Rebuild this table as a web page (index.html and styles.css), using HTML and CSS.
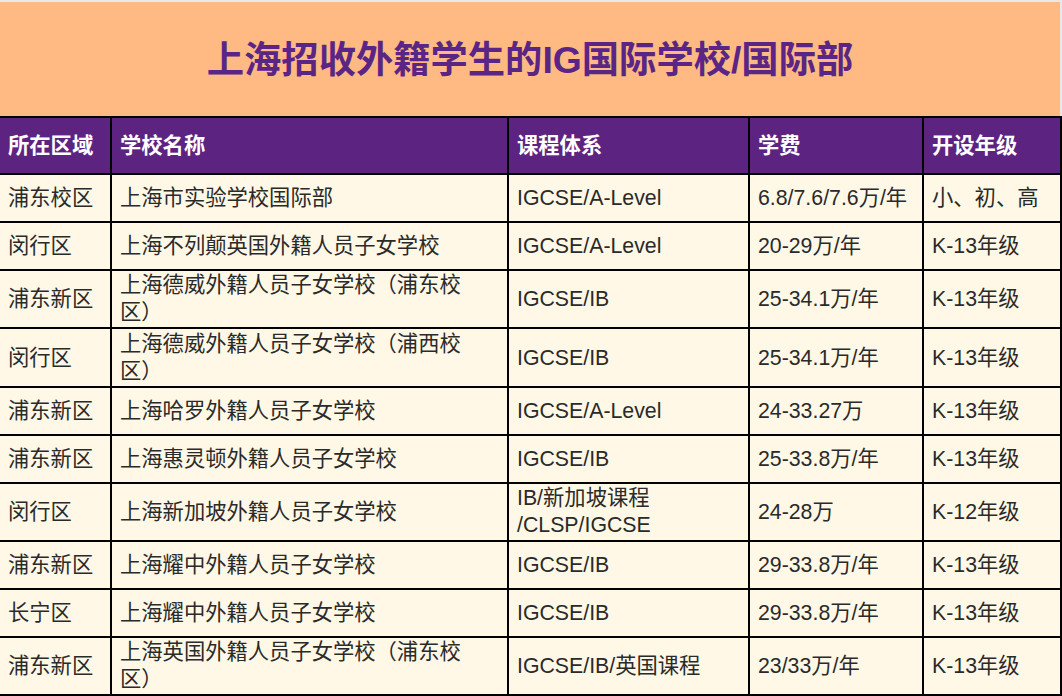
FILE: index.html
```html
<!DOCTYPE html>
<html lang="zh-CN">
<head>
<meta charset="utf-8">
<title>上海招收外籍学生的IG国际学校/国际部</title>
<link rel="stylesheet" href="styles.css">
</head>
<body>
<div class="banner"><h1 class="title">上海招收外籍学生的IG国际学校/国际部</h1></div>
<table class="schools">
  <colgroup>
    <col class="c1"><col class="c2"><col class="c3"><col class="c4"><col class="c5">
  </colgroup>
  <thead>
    <tr><th>所在区域</th><th>学校名称</th><th>课程体系</th><th>学费</th><th>开设年级</th></tr>
  </thead>
  <tbody>
    <tr><td>浦东校区</td><td class="name">上海市实验学校国际部</td><td>IGCSE/A-Level</td><td>6.8/7.6/7.6万/年</td><td>小、初、高</td></tr>
    <tr><td>闵行区</td><td class="name">上海不列颠英国外籍人员子女学校</td><td>IGCSE/A-Level</td><td>20-29万/年</td><td>K-13年级</td></tr>
    <tr><td>浦东新区</td><td class="name">上海德威外籍人员子女学校（浦东校区）</td><td>IGCSE/IB</td><td>25-34.1万/年</td><td>K-13年级</td></tr>
    <tr class="tall"><td>闵行区</td><td class="name">上海德威外籍人员子女学校（浦西校区）</td><td>IGCSE/IB</td><td>25-34.1万/年</td><td>K-13年级</td></tr>
    <tr><td>浦东新区</td><td class="name">上海哈罗外籍人员子女学校</td><td>IGCSE/A-Level</td><td>24-33.27万</td><td>K-13年级</td></tr>
    <tr><td>浦东新区</td><td class="name">上海惠灵顿外籍人员子女学校</td><td>IGCSE/IB</td><td>25-33.8万/年</td><td>K-13年级</td></tr>
    <tr><td>闵行区</td><td class="name">上海新加坡外籍人员子女学校</td><td>IB/新加坡课程<wbr>/CLSP/IGCSE</td><td>24-28万</td><td>K-12年级</td></tr>
    <tr><td>浦东新区</td><td class="name">上海耀中外籍人员子女学校</td><td>IGCSE/IB</td><td>29-33.8万/年</td><td>K-13年级</td></tr>
    <tr><td>长宁区</td><td class="name">上海耀中外籍人员子女学校</td><td>IGCSE/IB</td><td>29-33.8万/年</td><td>K-13年级</td></tr>
    <tr><td>浦东新区</td><td class="name">上海英国外籍人员子女学校（浦东校区）</td><td>IGCSE/IB/英国课程</td><td>23/33万/年</td><td>K-13年级</td></tr>
  </tbody>
</table>
</body>
</html>
```
FILE: styles.css
```css
html, body {
  margin: 0;
  padding: 0;
}
body {
  background: #e8e8e8;
  font-family: "Liberation Sans", "Noto Sans CJK SC", sans-serif;
  padding-top: 2px;
}
.banner {
  width: 1060px;
  height: 114px;
  background: #ffb982;
  display: flex;
  align-items: center;
  justify-content: center;
}
.title {
  margin: 0;
  font-size: 37.3px;
  font-weight: bold;
  color: #5b2586;
  line-height: 1.2;
  padding-top: 2px;
}
.schools {
  width: 1062px;
  table-layout: fixed;
  border-collapse: separate;
  border-spacing: 0;
  border-top: 2px solid #000;
}
.c1 { width: 112px; }
.c2 { width: 397px; }
.c3 { width: 241px; }
.c4 { width: 174px; }
.c5 { width: 138px; }
.schools th,
.schools td {
  box-sizing: content-box;
  border-right: 2px solid #000;
  border-bottom: 2px solid #000;
  text-align: left;
  vertical-align: middle;
  font-size: 21.3px;
}
.schools th {
  background: #5c2381;
  color: #fff;
  font-weight: bold;
  height: 55px;
  padding: 0 8px;
  line-height: 26px;
}
.schools td {
  background: #fff8e6;
  color: #2a2a2a;
  font-weight: normal;
  height: 44px;
  padding: 1px 8px 1px 8px;
  line-height: 27px;
}
.schools td.name {
  padding-right: 20px;
}
.schools tr.tall td {
  padding-top: 2px;
  padding-bottom: 1px;
}
```
